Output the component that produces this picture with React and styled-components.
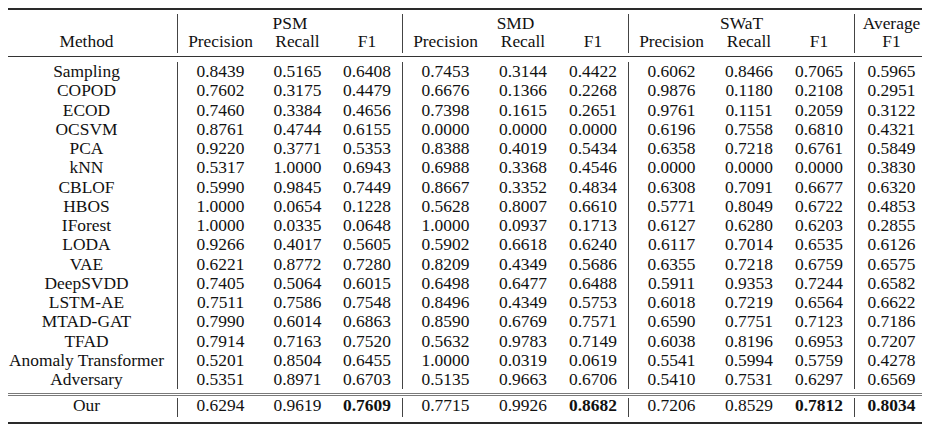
import React from "react";
import styled, { createGlobalStyle } from "styled-components";

const GlobalStyle = createGlobalStyle`
  body {
    margin: 0;
    background: #fff;
  }
`;

const Page = styled.div`
  padding: 8px 0 0 8px;
  width: 914px;
  font-family: "Liberation Serif", "Times New Roman", serif;
  font-size: 17.4px;
  color: #111;
`;

// booktabs style rules
const Rule = styled.div`
  height: ${(props) => props.$h}px;
  background: ${(props) => props.$color};
  margin: ${(props) => props.$m};
`;

const DoubleRule = styled.div`
  height: 1px;
  border-top: 1px solid #7a7a7a;
  border-bottom: 1px solid #7a7a7a;
  margin: 4px 0 2px;
`;

const Grid = styled.div`
  display: grid;
  grid-template-columns: 169px 86px 69px 70px 86px 70px 70px 86px 70px 70px 68px;
  line-height: ${(props) => props.$lh}px;
`;

const Cell = styled.div`
  text-align: center;
  white-space: nowrap;
  grid-column: span ${(props) => props.$span || 1};
  border-left: ${(props) => (props.$edge ? "1px solid #444" : "none")};
  padding-bottom: ${(props) => props.$pb || 0}px;
  padding-right: ${(props) => (props.$lead ? 12 : 0)}px;
  padding-left: ${(props) => (props.$tail ? 6 : 0)}px;
  font-weight: ${(props) => (props.$bold ? 700 : 400)};
`;

const rows = [
  ["Sampling", "0.8439", "0.5165", "0.6408", "0.7453", "0.3144", "0.4422", "0.6062", "0.8466", "0.7065", "0.5965"],
  ["COPOD", "0.7602", "0.3175", "0.4479", "0.6676", "0.1366", "0.2268", "0.9876", "0.1180", "0.2108", "0.2951"],
  ["ECOD", "0.7460", "0.3384", "0.4656", "0.7398", "0.1615", "0.2651", "0.9761", "0.1151", "0.2059", "0.3122"],
  ["OCSVM", "0.8761", "0.4744", "0.6155", "0.0000", "0.0000", "0.0000", "0.6196", "0.7558", "0.6810", "0.4321"],
  ["PCA", "0.9220", "0.3771", "0.5353", "0.8388", "0.4019", "0.5434", "0.6358", "0.7218", "0.6761", "0.5849"],
  ["kNN", "0.5317", "1.0000", "0.6943", "0.6988", "0.3368", "0.4546", "0.0000", "0.0000", "0.0000", "0.3830"],
  ["CBLOF", "0.5990", "0.9845", "0.7449", "0.8667", "0.3352", "0.4834", "0.6308", "0.7091", "0.6677", "0.6320"],
  ["HBOS", "1.0000", "0.0654", "0.1228", "0.5628", "0.8007", "0.6610", "0.5771", "0.8049", "0.6722", "0.4853"],
  ["IForest", "1.0000", "0.0335", "0.0648", "1.0000", "0.0937", "0.1713", "0.6127", "0.6280", "0.6203", "0.2855"],
  ["LODA", "0.9266", "0.4017", "0.5605", "0.5902", "0.6618", "0.6240", "0.6117", "0.7014", "0.6535", "0.6126"],
  ["VAE", "0.6221", "0.8772", "0.7280", "0.8209", "0.4349", "0.5686", "0.6355", "0.7218", "0.6759", "0.6575"],
  ["DeepSVDD", "0.7405", "0.5064", "0.6015", "0.6498", "0.6477", "0.6488", "0.5911", "0.9353", "0.7244", "0.6582"],
  ["LSTM-AE", "0.7511", "0.7586", "0.7548", "0.8496", "0.4349", "0.5753", "0.6018", "0.7219", "0.6564", "0.6622"],
  ["MTAD-GAT", "0.7990", "0.6014", "0.6863", "0.8590", "0.6769", "0.7571", "0.6590", "0.7751", "0.7123", "0.7186"],
  ["TFAD", "0.7914", "0.7163", "0.7520", "0.5632", "0.9783", "0.7149", "0.6038", "0.8196", "0.6953", "0.7207"],
  ["Anomaly Transformer", "0.5201", "0.8504", "0.6455", "1.0000", "0.0319", "0.0619", "0.5541", "0.5994", "0.5759", "0.4278"],
  ["Adversary", "0.5351", "0.8971", "0.6703", "0.5135", "0.9663", "0.6706", "0.5410", "0.7531", "0.6297", "0.6569"],
];

const ours = ["Our", "0.6294", "0.9619", "0.7609", "0.7715", "0.9926", "0.8682", "0.7206", "0.8529", "0.7812", "0.8034"];
const boldCols = [3, 6, 9, 10];

// columns that start a new group get the vertical line
const edges = [1, 4, 7, 10];

const Row = ({ values, bold = [], pb }) =>
  values.map((v, i) => (
    <Cell
      key={i}
      $edge={edges.includes(i)}
      $lead={i === 0}
      $tail={i === 10}
      $bold={bold.includes(i)}
      $pb={pb}
    >
      {v}
    </Cell>
  ));

const App = () => {
  const subHead = ["Method", "Precision", "Recall", "F1", "Precision", "Recall", "F1", "Precision", "Recall", "F1", "F1"];

  return (
    <Page>
      <GlobalStyle />
      <Rule $h={2} $color="#2a2a2a" $m="0 0 4px" />
      <Grid $lh={18}>
        <Cell $lead />
        <Cell $span={3} $edge>PSM</Cell>
        <Cell $span={3} $edge>SMD</Cell>
        <Cell $span={3} $edge>SWaT</Cell>
        <Cell $edge $tail>Average</Cell>
        <Row values={subHead} pb={3} />
      </Grid>
      <Rule $h={1} $color="#333" $m="3px 0 5px" />
      <Grid $lh={19.25}>
        {rows.map((r) => (
          <Row key={r[0]} values={r} />
        ))}
      </Grid>
      <DoubleRule />
      <Grid $lh={15}>
        <Row values={ours} bold={boldCols} pb={4} />
      </Grid>
      <Rule $h={2} $color="#2a2a2a" $m="5px 0 0" />
    </Page>
  );
};

export default App;
